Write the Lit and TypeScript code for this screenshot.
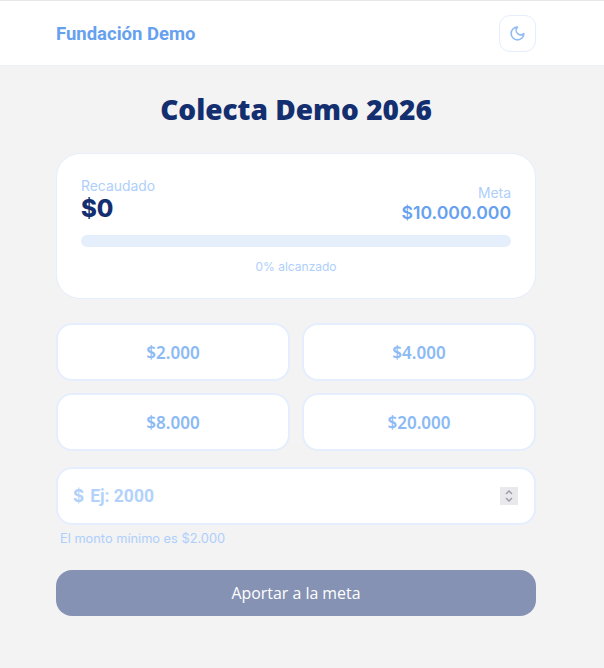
import { LitElement, html, css } from "lit";
import { customElement } from "lit/decorators.js";

@customElement("app-root")
export class AppRoot extends LitElement {
  static styles = css`
    :host { display: block; min-height: 668px; background: #f3f3f4; font-family: Inter, sans-serif; }
    header { height: 64px; background: #fff; border-top: 1px solid #e8e8ea; border-bottom: 1px solid #e9f0f9; display: flex; align-items: center; justify-content: space-between; padding: 0 68px 0 56px; }
    .brand { font: 700 18.5px/24px Roboto, sans-serif; color: #66a1ef; padding-top: 2px; }
    .theme { width: 37px; height: 37px; box-sizing: border-box; border: 1px solid #e4eefc; border-radius: 11px; background: #fff; display: flex; align-items: center; justify-content: center; padding: 0; }
    main { width: 480px; margin-left: 56px; display: flex; flex-direction: column; }
    h1 { margin: 24px 0 25px; text-align: center; font: 800 28px/38px "Open Sans", sans-serif; color: #142f70; }
    .card { height: 146px; box-sizing: border-box; background: #fff; border: 1px solid #e4eefc; border-radius: 24px; padding: 24px 24px 0; }
    .row { display: flex; justify-content: space-between; align-items: flex-end; }
    .right { text-align: right; margin-bottom: -2px; }
    .label { font-size: 13.9px; line-height: 17px; color: #aecffb; }
    .raised { font-size: 24px; line-height: 27px; font-weight: 800; color: #142f70; }
    .right .label { line-height: 16px; }
    .goal { font-size: 17.6px; line-height: 23px; font-weight: 600; color: #66a1ef; }
    .bar { height: 12px; border-radius: 6px; background: #e5effb; margin-top: 13px; }
    .pct { margin-top: 12px; text-align: center; font-size: 12px; line-height: 16px; color: #aecffb; }
    .grid { display: grid; grid-template-columns: 1fr 1fr; gap: 12px; margin-top: 24px; }
    .amount { height: 58px; box-sizing: border-box; background: #fff; border: 2px solid #e4eefc; border-radius: 16px; font: 600 17px "Noto Sans", sans-serif; color: #8bbaf5; padding: 0; }
    .input { height: 58px; box-sizing: border-box; margin-top: 16px; background: #fff; border: 2px solid #e4eefc; border-radius: 16px; display: flex; align-items: center; padding: 0 16px 0 15px; gap: 6px; color: #b3d2fb; }
    .dollar { font-weight: 700; font-size: 17px; }
    .text { flex: 1; font: 700 17.5px Roboto, sans-serif; }
    .spin { width: 18px; height: 18px; background: #e9e9ed; display: flex; align-items: center; justify-content: center; }
    .note { margin: 6px 0 0 4px; font-size: 12.8px; line-height: 16px; color: #aecffb; }
    .submit { height: 46px; margin-top: 23px; border: 0; border-radius: 16px; background: #8592b3; color: #fff; font: 500 15.9px "Open Sans", sans-serif; padding: 0; }
  `;

  render() {
    const amounts = ["$2.000", "$4.000", "$8.000", "$20.000"];
    return html`
      <header>
        <div class="brand">Fundación Demo</div>
        <button class="theme" aria-label="Cambiar tema">
          <svg width="17" height="17" viewBox="0 0 24 24" fill="none" stroke="#8fbcf5" stroke-width="2.3" stroke-linecap="round" stroke-linejoin="round">
            <path d="M12 3a6 6 0 0 0 9 9 9 9 0 1 1-9-9Z" />
          </svg>
        </button>
      </header>
      <main>
        <h1>Colecta Demo 2026</h1>
        <section class="card">
          <div class="row">
            <div>
              <div class="label">Recaudado</div>
              <div class="raised">$0</div>
            </div>
            <div class="right">
              <div class="label">Meta</div>
              <div class="goal">$10.000.000</div>
            </div>
          </div>
          <div class="bar"></div>
          <div class="pct">0% alcanzado</div>
        </section>
        <div class="grid">
          ${amounts.map((a) => html`<button class="amount">${a}</button>`)}
        </div>
        <div class="input">
          <span class="dollar">$</span>
          <span class="text">Ej: 2000</span>
          <span class="spin">
            <svg width="10" height="14" viewBox="0 0 10 14" fill="none" stroke="#9a9aa5" stroke-width="1.4">
              <path d="M2 5l3-3 3 3M2 9l3 3 3-3" />
            </svg>
          </span>
        </div>
        <div class="note">El monto mínimo es $2.000</div>
        <button class="submit">Aportar a la meta</button>
      </main>
    `;
  }
}
